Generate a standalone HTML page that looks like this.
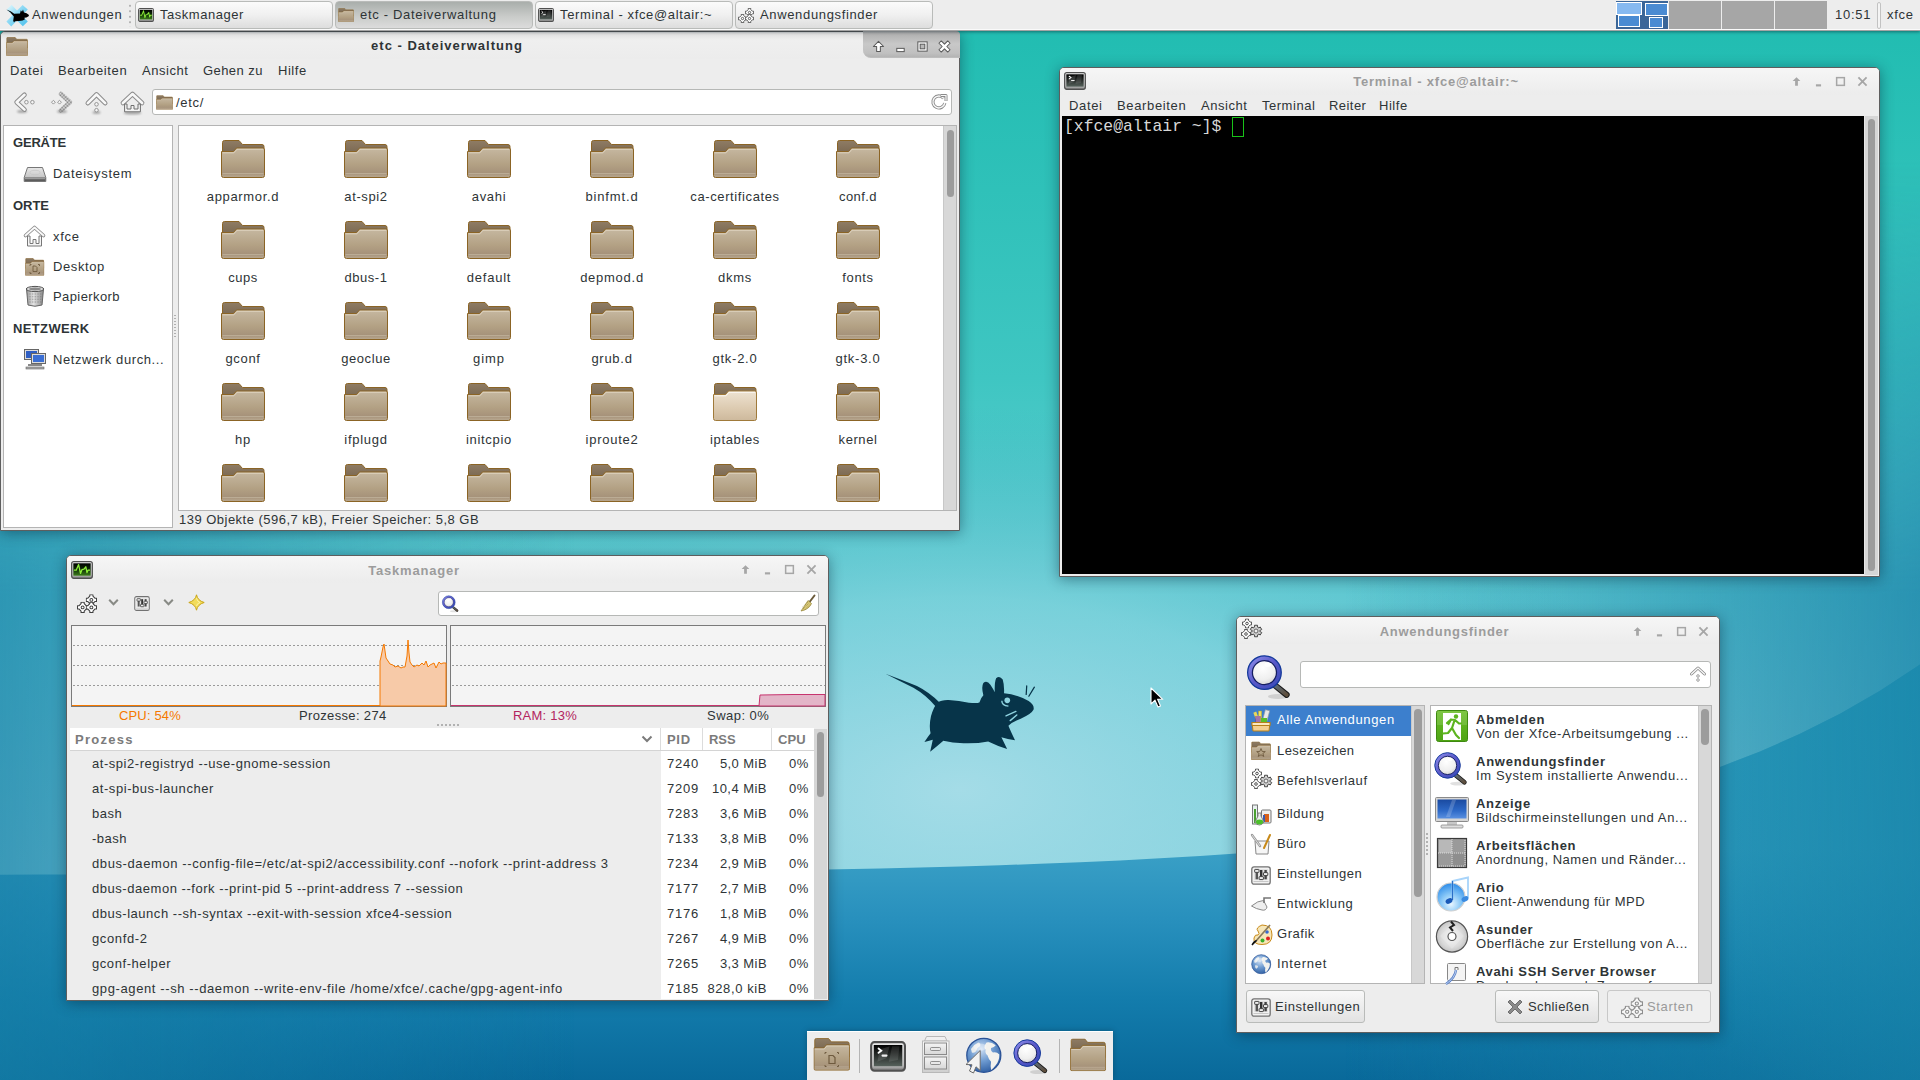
<!DOCTYPE html>
<html><head><meta charset="utf-8">
<style>
*{margin:0;padding:0;box-sizing:border-box}
html,body{width:1920px;height:1080px;overflow:hidden;position:relative;background:#2bb3bd}
body{font-family:"Liberation Sans",sans-serif;font-size:13px;letter-spacing:.45px;color:#2e3436}
.a{position:absolute}
.t{position:absolute;white-space:nowrap;line-height:17px;height:17px}
.b{font-weight:bold}
.win{position:absolute;background:#ededed;border:1px solid #5e5e5e;border-radius:5px 5px 0 0;box-shadow:0 2px 14px rgba(0,30,50,.45)}
.tb{position:absolute;left:0;right:0;top:0;height:27px;border-radius:4px 4px 0 0;background:linear-gradient(#f6f6f6,#ececec)}
.wt{position:absolute;top:6px;left:0;right:0;text-align:center;font-weight:bold;letter-spacing:1px;color:#9a9a9a;line-height:17px}
.frame{position:absolute;background:#fff;border:1px solid #b4b4b4}
.vs{position:absolute;background:#d8d8d8;border-left:1px solid #c8c8c8}
.th{position:absolute;background:#9c9c9c;border-radius:4px;left:2px;right:2px}
</style></head><body>
<!-- desktop background -->
<svg class="a" style="left:0;top:0" width="1920" height="1080" viewBox="0 0 1920 1080">
<defs>
<linearGradient id="bgTop" x1="0" y1="0" x2="0" y2="1">
<stop offset="0" stop-color="#1fbcb0"/><stop offset=".35" stop-color="#3fc6c2"/><stop offset=".6" stop-color="#6ccfd8"/><stop offset=".8" stop-color="#8fd6e2"/><stop offset="1" stop-color="#8fd6e2"/>
</linearGradient>
<radialGradient id="bgGlow" cx="960" cy="790" r="700" gradientUnits="userSpaceOnUse" gradientTransform="translate(960 790) scale(1 .55) translate(-960 -790)">
<stop offset="0" stop-color="#a8dde8" stop-opacity=".9"/><stop offset=".5" stop-color="#8ad3df" stop-opacity=".5"/><stop offset="1" stop-color="#2aa0b8" stop-opacity="0"/>
</radialGradient>
<linearGradient id="bgEdge" x1="0" y1="0" x2="1" y2="0">
<stop offset="0" stop-color="#167fa6" stop-opacity=".7"/><stop offset=".3" stop-color="#167fa6" stop-opacity="0"/><stop offset=".7" stop-color="#167fa6" stop-opacity="0"/><stop offset="1" stop-color="#167fa6" stop-opacity=".75"/>
</linearGradient>
<linearGradient id="bgLow" gradientUnits="userSpaceOnUse" x1="0" y1="850" x2="0" y2="1080">
<stop offset="0" stop-color="#3aa0c6"/><stop offset=".3" stop-color="#2890bd"/><stop offset=".65" stop-color="#137cac"/><stop offset="1" stop-color="#09699a"/>
</linearGradient>
</defs>
<rect width="1920" height="1080" fill="url(#bgTop)"/>
<rect width="1920" height="1080" fill="url(#bgGlow)"/>
<path d="M0 874.7 L40 874.6 L80 874.5 L120 874.5 L160 874.4 L200 874.3 L240 874.2 L280 874.1 L320 874.0 L360 873.8 L400 873.7 L440 873.5 L480 873.3 L520 873.0 L560 872.7 L600 872.4 L640 872.0 L680 871.6 L720 871.1 L760 870.6 L800 870.0 L840 869.2 L880 868.4 L920 867.5 L960 866.4 L1000 865.2 L1040 863.8 L1080 862.2 L1120 860.4 L1160 858.3 L1200 855.9 L1240 853.2 L1280 850.1 L1320 846.5 L1360 842.4 L1400 837.8 L1440 832.5 L1480 826.4 L1520 819.5 L1560 811.6 L1600 802.5 L1640 792.2 L1680 780.4 L1720 766.9 L1760 751.5 L1800 733.8 L1840 713.7 L1880 690.7 L1920 664.4 L1920 1080 L0 1080 Z" fill="url(#bgLow)"/>
<radialGradient id="lowR" cx="1920" cy="690" r="420" gradientUnits="userSpaceOnUse"><stop offset="0" stop-color="#2cb0c2" stop-opacity=".75"/><stop offset="1" stop-color="#2cb0c2" stop-opacity="0"/></radialGradient>
<path d="M0 874.7 L40 874.6 L80 874.5 L120 874.5 L160 874.4 L200 874.3 L240 874.2 L280 874.1 L320 874.0 L360 873.8 L400 873.7 L440 873.5 L480 873.3 L520 873.0 L560 872.7 L600 872.4 L640 872.0 L680 871.6 L720 871.1 L760 870.6 L800 870.0 L840 869.2 L880 868.4 L920 867.5 L960 866.4 L1000 865.2 L1040 863.8 L1080 862.2 L1120 860.4 L1160 858.3 L1200 855.9 L1240 853.2 L1280 850.1 L1320 846.5 L1360 842.4 L1400 837.8 L1440 832.5 L1480 826.4 L1520 819.5 L1560 811.6 L1600 802.5 L1640 792.2 L1680 780.4 L1720 766.9 L1760 751.5 L1800 733.8 L1840 713.7 L1880 690.7 L1920 664.4 L1920 1080 L0 1080 Z" fill="url(#lowR)"/>
<mask id="edgeMask"><rect width="1920" height="1080" fill="url(#edgeMG)"/></mask>
<linearGradient id="edgeMG" x1="0" y1="0" x2="0" y2="1"><stop offset=".15" stop-color="#000"/><stop offset=".55" stop-color="#fff"/><stop offset="1" stop-color="#fff"/></linearGradient>
<rect width="1920" height="1080" fill="url(#bgEdge)" mask="url(#edgeMask)"/>
</svg>

<!-- TOP PANEL -->
<div class="a" style="left:0;top:0;width:1920px;height:31px;z-index:100">
<div class="a" style="left:0;top:0;width:1920px;height:31px;background:#ededed;border-bottom:1px solid #a4a4a4;box-shadow:0 1px 3px rgba(0,20,30,.45)"></div>
<div class="a" style="left:0;top:29px;width:1920px;height:1px;background:#fafafa"></div>
<svg width="0" height="0" style="position:absolute"><defs>
<linearGradient id="grnS" x1="0" y1="0" x2="0" y2="1"><stop offset="0" stop-color="#000"/><stop offset=".45" stop-color="#0d2a06"/><stop offset="1" stop-color="#3c7d1a"/></linearGradient>
<linearGradient id="trmS" x1="0" y1="0" x2="0" y2="1"><stop offset="0" stop-color="#000"/><stop offset=".5" stop-color="#2a2e2c"/><stop offset="1" stop-color="#56625c"/></linearGradient>
<linearGradient id="monF" x1="0" y1="0" x2="0" y2="1"><stop offset="0" stop-color="#f2f2f2"/><stop offset=".8" stop-color="#cfcfcf"/><stop offset="1" stop-color="#6a6a6a"/></linearGradient>
<symbol id="tmIco" viewBox="0 0 22 18">
<rect x=".7" y=".7" width="20.6" height="16.6" rx="2" fill="url(#monF)" stroke="#505050" stroke-width="1.3"/>
<rect x="2.3" y="2.3" width="17.4" height="12.4" fill="url(#grnS)"/>
<path d="M3 9.2 L5.2 9.2 L6.6 6 L7.6 3.6 L9.5 12.4 L11 8.6 L13 8.2 L14.8 5.8 L16 11.6 L17 9.2 L19 9.2" fill="none" stroke="#8ef03a" stroke-width="1.3" stroke-linejoin="round"/>
</symbol>
<symbol id="trmIco" viewBox="0 0 22 18">
<rect x=".7" y=".7" width="20.6" height="16.6" rx="2" fill="url(#monF)" stroke="#505050" stroke-width="1.3"/>
<rect x="2.3" y="2.3" width="17.4" height="12.4" fill="url(#trmS)"/>
<path d="M6 5 L12 3 L10 10 L4.5 12 Z" fill="#fff" opacity=".12"/>
<path d="M13.5 3 L18 3 L17 11 L11.5 12 Z" fill="#fff" opacity=".1"/>
<path d="M5.2 4.3 L6.9 5.6 L5.2 6.9" fill="none" stroke="#fff" stroke-width="1.1" stroke-linecap="round"/>
<path d="M7.6 8.5 L10.1 8.5" stroke="#eee" stroke-width="1.2" stroke-linecap="round"/>
</symbol>
<symbol id="gear1" viewBox="-5 -5 10 10">
<path d="M-1.4 -4.6 L1.4 -4.6 L1.4 -3.3 L3.3 -1.4 L4.6 -1.4 L4.6 1.4 L3.3 1.4 L1.4 3.3 L1.4 4.6 L-1.4 4.6 L-1.4 3.3 L-3.3 1.4 L-4.6 1.4 L-4.6 -1.4 L-3.3 -1.4 L-1.4 -3.3 Z" fill="#fff" stroke="#404040" stroke-width=".95" stroke-linejoin="round"/>
<circle r="1.3" fill="none" stroke="#404040" stroke-width=".9"/>
</symbol>
<symbol id="gears" viewBox="0 0 16 16">
<use href="#gear1" x="7" y="1" width="9" height="9"/>
<use href="#gear1" x="0" y="7" width="9" height="9"/>
<use href="#gear1" x="7" y="7" width="9" height="9"/>
</symbol>
</defs></svg>
<!-- panel content -->
<svg class="a" style="left:3px;top:2px" width="28" height="26" viewBox="0 0 28 26">
<defs><linearGradient id="xg" x1="0" y1="0" x2="1" y2="1"><stop offset="0" stop-color="#e8fbff"/><stop offset=".45" stop-color="#8ad8f4"/><stop offset="1" stop-color="#4cc0ec"/></linearGradient></defs>
<path d="M8.6 2.8 L14 8.6 L19.6 3 L24.8 7.6 L19 13.6 L24.8 19.6 L19.8 24.2 L14 18.4 L8.2 24.4 L3.4 19.6 L9.2 13.6 L3.6 7.6 Z" fill="url(#xg)"/>
<path d="M3.4 7.6 L7.6 9.2 L11.2 11.8 L17 11.6 L17.8 8.2 L19 9.8 L20 7.6 L21 10.4 L23.6 11.2 L26 13 L25.6 14.2 L23.4 15.4 L21.4 15.8 L21.8 17.4 L19.6 18.6 L16 19 L12 19.2 L11 20.6 L10.2 18.8 L10.8 14.6 L7.2 10.2 Z" fill="#000"/>
</svg>
<div class="t" style="left:32px;top:6px;letter-spacing:0.66px">Anwendungen</div>
<div class="a" style="left:129px;top:3px;width:2px;height:24px;background:radial-gradient(circle,#b4b4b4 0.9px,transparent 1.1px) 0 0/2px 5.5px"></div>
<div class="a" style="left:135px;top:1px;width:198px;height:28px;border:1px solid #b9bbb9;border-radius:4px;background:linear-gradient(#fbfbfb,#f0f0f0 50%,#dddddd)"></div>
<svg class="a" style="left:138px;top:8px" width="16" height="14" viewBox="0 0 22 18" preserveAspectRatio="none"><use href="#tmIco"/></svg>
<div class="t" style="left:160px;top:6px;letter-spacing:0.53px">Taskmanager</div>
<div class="a" style="left:335px;top:1px;width:198px;height:28px;border:1px solid #b9bbb9;border-radius:4px;background:linear-gradient(#a9aeab,#c9cbc9 55%,#dcdcdc)"></div>
<svg class="a" style="left:338px;top:8px" width="16" height="14" viewBox="0 0 44 38" preserveAspectRatio="none"><use href="#folder"/></svg>
<div class="t" style="left:360px;top:6px;letter-spacing:0.69px">etc - Dateiverwaltung</div>
<div class="a" style="left:535px;top:1px;width:198px;height:28px;border:1px solid #b9bbb9;border-radius:4px;background:linear-gradient(#fbfbfb,#f0f0f0 50%,#dddddd)"></div>
<svg class="a" style="left:538px;top:8px" width="16" height="14" viewBox="0 0 22 18" preserveAspectRatio="none"><use href="#trmIco"/></svg>
<div class="t" style="left:560px;top:6px;letter-spacing:0.63px">Terminal - xfce@altair:~</div>
<div class="a" style="left:735px;top:1px;width:198px;height:28px;border:1px solid #b9bbb9;border-radius:4px;background:linear-gradient(#fbfbfb,#f0f0f0 50%,#dddddd)"></div>
<svg class="a" style="left:738px;top:7px" width="16" height="16" viewBox="0 0 16 16"><use href="#gears"/></svg>
<div class="t" style="left:760px;top:6px;letter-spacing:0.65px">Anwendungsfinder</div>
<div class="a" style="left:1616px;top:1px;width:52px;height:28px;background:#3b6698"></div>
<div class="a" style="left:1616px;top:2px;width:26px;height:13px;background:#86b9f0;border:1px solid #fff"></div>
<div class="a" style="left:1618px;top:15px;width:22px;height:12px;background:#4a8bd2;border:1px solid #fff"></div>
<div class="a" style="left:1645px;top:3px;width:23px;height:13px;background:#4a8bd2;border:1px solid #fff"></div>
<div class="a" style="left:1649px;top:17px;width:14px;height:11px;background:#4a8bd2;border:1px solid #fff"></div>
<div class="a" style="left:1669px;top:1px;width:52px;height:28px;background:#a6a6a6"></div>
<div class="a" style="left:1722px;top:1px;width:52px;height:28px;background:#a6a6a6"></div>
<div class="a" style="left:1775px;top:1px;width:52px;height:28px;background:#a6a6a6"></div>
<div class="t" style="left:1835px;top:6px;letter-spacing:0.76px">10:51</div>
<div class="a" style="left:1877px;top:2px;width:4px;height:27px;border:1px solid #c2c2c2;border-radius:2px;background:#f4f4f4"></div>
<div class="t" style="left:1887px;top:6px;letter-spacing:0.68px">xfce</div>
</div>


<svg width="0" height="0" style="position:absolute">
<defs>
<linearGradient id="fBack" x1="0" y1="0" x2="0" y2="1"><stop offset="0" stop-color="#8f7c64"/><stop offset="1" stop-color="#6c5b45"/></linearGradient>
<linearGradient id="fFront" x1="0" y1="0" x2="0" y2="1"><stop offset="0" stop-color="#c6b8a1"/><stop offset=".55" stop-color="#b3a184"/><stop offset=".85" stop-color="#a6927a"/><stop offset="1" stop-color="#b9a991"/></linearGradient>
<linearGradient id="fFrontL" x1="0" y1="0" x2="0" y2="1"><stop offset="0" stop-color="#eee3d2"/><stop offset=".6" stop-color="#dccab0"/><stop offset="1" stop-color="#cdb99c"/></linearGradient>
<symbol id="folder" viewBox="0 0 44 38">
<path d="M1.5 2.5 Q1.5 .5 3.5 .5 L18 .5 L21.5 4.5 L41 4.5 Q43 4.5 43 6.5 L43 22 L1.5 22 Z" fill="url(#fBack)" stroke="#8b6425" stroke-width="1"/>
<path d="M.5 11.5 L12.5 11.5 L15.5 8 L42 8 Q43.5 8 43.5 10 L43.5 35.5 Q43.5 37.5 41.5 37.5 L2.5 37.5 Q.5 37.5 .5 35.5 Z" fill="url(#fFront)" stroke="#8b6425" stroke-width="1"/>
<path d="M1.5 12.8 L13 12.8 L16 9.3 L42.3 9.3" fill="none" stroke="#e3d8c6" stroke-width="1" opacity=".8"/>
<path d="M1.5 33.5 L42.5 33.5" stroke="#c9bca6" stroke-width="1" opacity=".6"/>
</symbol>
<symbol id="folderL" viewBox="0 0 44 38">
<path d="M1.5 2.5 Q1.5 .5 3.5 .5 L18 .5 L21.5 4.5 L41 4.5 Q43 4.5 43 6.5 L43 22 L1.5 22 Z" fill="url(#fBack)" stroke="#8b6425" stroke-width="1"/>
<path d="M.5 11.5 L12.5 11.5 L15.5 8 L42 8 Q43.5 8 43.5 10 L43.5 35.5 Q43.5 37.5 41.5 37.5 L2.5 37.5 Q.5 37.5 .5 35.5 Z" fill="url(#fFrontL)" stroke="#a07a3a" stroke-width="1"/>
<path d="M1.5 12.8 L13 12.8 L16 9.3 L42.3 9.3" fill="none" stroke="#fff" stroke-width="1" opacity=".8"/>
</symbol>
<symbol id="wbUp" viewBox="0 0 14 14"><path d="M7 1.5 L12.5 7 L9 7 L9 12.5 L5 12.5 L5 7 L1.5 7 Z" fill="#fff" stroke="#5a5a5a" stroke-width="1.1" stroke-linejoin="round"/></symbol>
<symbol id="wbMin" viewBox="0 0 14 14"><rect x="3" y="9" width="8" height="3.5" fill="#fff" stroke="#5a5a5a" stroke-width="1.1"/></symbol>
<symbol id="wbMax" viewBox="0 0 14 14"><rect x="2" y="2" width="10" height="10" fill="#fff" stroke="#5a5a5a" stroke-width="1.1"/><rect x="4.5" y="4.5" width="5" height="5" fill="#b8b8b8" stroke="#5a5a5a" stroke-width="1.1"/></symbol>
<symbol id="wbClose" viewBox="0 0 14 14"><path d="M1 3.5 L3.5 1 L7 4.5 L10.5 1 L13 3.5 L9.5 7 L13 10.5 L10.5 13 L7 9.5 L3.5 13 L1 10.5 L4.5 7 Z" fill="#fff" stroke="#5a5a5a" stroke-width="1.1" stroke-linejoin="round"/></symbol>
<symbol id="ibUp" viewBox="0 0 14 14"><path d="M7 3 L10.6 6.6 L8.3 6.6 L8.3 11 L5.7 11 L5.7 6.6 L3.4 6.6 Z" fill="#a6a6a6"/></symbol>
<symbol id="ibMin" viewBox="0 0 14 14"><rect x="4.6" y="9.6" width="4.8" height="2" fill="#a6a6a6"/></symbol>
<symbol id="ibMax" viewBox="0 0 14 14"><rect x="3.4" y="3.4" width="7.2" height="7.2" fill="none" stroke="#a6a6a6" stroke-width="1.4"/></symbol>
<symbol id="ibClose" viewBox="0 0 14 14"><path d="M3.2 3.2 L10.8 10.8 M10.8 3.2 L3.2 10.8" stroke="#a6a6a6" stroke-width="1.7"/></symbol>
</defs></svg>
<!-- FILE MANAGER -->
<div class="win" style="left:0;top:31px;width:960px;height:500px;border-radius:5px 5px 0 0">
 <div class="tb" style="background:linear-gradient(#dcdcdc,#efefef 30%,#ececec)"></div>
 <svg class="a" style="left:5px;top:5px" width="22" height="19" viewBox="0 0 44 38"><use href="#folder"/></svg>
 <div class="wt" style="left:30px;right:96px;top:5px;color:#2e3436;letter-spacing:1px">etc - Dateiverwaltung</div>
 <div class="a" style="left:862px;top:-1px;width:97px;height:27px;border-radius:0 4px 0 8px;background:linear-gradient(#aaaaaa,#c8c8c8 50%,#c0c0c0 85%,#b4b4b4);border-bottom:1px solid #bdbdbd"></div>
 <svg class="a" style="left:871px;top:8px" width="13" height="13" viewBox="0 0 14 14"><use href="#wbUp"/></svg>
 <svg class="a" style="left:893px;top:8px" width="13" height="13" viewBox="0 0 14 14"><use href="#wbMin"/></svg>
 <svg class="a" style="left:915px;top:8px" width="13" height="13" viewBox="0 0 14 14"><use href="#wbMax"/></svg>
 <svg class="a" style="left:937px;top:8px" width="13" height="13" viewBox="0 0 14 14"><use href="#wbClose"/></svg>
</div>
<div class="t" style="left:10px;top:62px;letter-spacing:0.65px">Datei</div>
<div class="t" style="left:58px;top:62px;letter-spacing:0.64px">Bearbeiten</div>
<div class="t" style="left:142px;top:62px;letter-spacing:0.55px">Ansicht</div>
<div class="t" style="left:203px;top:62px;letter-spacing:0.43px">Gehen zu</div>
<div class="t" style="left:278px;top:62px;letter-spacing:0.53px">Hilfe</div>
<svg class="a" style="left:8px;top:86px" width="144" height="36" viewBox="8 86 144 36">
<defs><filter id="sh" x="-20%" y="-20%" width="140%" height="160%"><feGaussianBlur stdDeviation=".8"/></filter><pattern id="chk" width="1.4" height="1.4" patternUnits="userSpaceOnUse"><rect width=".7" height=".7" fill="#7a7a7a"/><rect x=".7" y=".7" width=".7" height=".7" fill="#7a7a7a"/></pattern></defs>
<g opacity=".35" filter="url(#sh)"><ellipse cx="22" cy="111.5" rx="5" ry="1.3" fill="#000"/><ellipse cx="62" cy="111.5" rx="5" ry="1.3" fill="#000"/><ellipse cx="96.5" cy="112.5" rx="4" ry="1.2" fill="#000"/><ellipse cx="132.5" cy="113" rx="9" ry="1.3" fill="#000"/></g>
<g fill="none" stroke-linecap="round" stroke-linejoin="round">
<path d="M24.5 94.8 L16.6 102.2 L24.5 109.6" stroke="#8c8c8c" stroke-width="4.6"/>
<path d="M24.5 94.8 L16.6 102.2 L24.5 109.6" stroke="#f7f7f7" stroke-width="2.6"/>
<path d="M87.8 103.2 L96.5 94.5 L105.2 103.2" stroke="#8c8c8c" stroke-width="4.6"/>
<path d="M87.8 103.2 L96.5 94.5 L105.2 103.2" stroke="#f7f7f7" stroke-width="2.6"/>
<path d="M122.9 103 L132.5 94 L142.1 103" stroke="#8c8c8c" stroke-width="4.6"/>
<path d="M122.9 103 L132.5 94 L142.1 103" stroke="#f7f7f7" stroke-width="2.6"/>
<path d="M61 94 L70 102.2 L61 110.4" stroke="url(#chk)" stroke-width="4.6"/>
</g>
<g fill="#f4f4f4" stroke="#8c8c8c" stroke-width=".9">
<circle cx="26.4" cy="102.2" r="1.8"/><circle cx="32.4" cy="102.2" r="1.8"/>
<circle cx="96.5" cy="104.3" r="1.8"/><circle cx="96.5" cy="110.2" r="1.8"/>
<path d="M53.4 100.3 L55.3 102.2 L53.4 104.1 L51.5 102.2 Z"/><path d="M59.5 100.3 L61.4 102.2 L59.5 104.1 L57.6 102.2 Z"/>
<path d="M124.6 104 L124.6 111.8 L140.4 111.8 L140.4 104 L138 104 L138 109 L134 109 L134 105.5 L131 105.5 L131 109 L127 109 L127 104 Z" stroke="#6e6e6e" stroke-width="1"/>
</g>
</svg>

<div class="a" style="left:152px;top:89px;width:800px;height:26px;background:#fff;border:1px solid #b6b8b6;border-radius:3px"></div>
<svg class="a" style="left:156px;top:95px" width="17" height="15" viewBox="0 0 44 38"><use href="#folder"/></svg>
<div class="t" style="left:176px;top:94px;letter-spacing:0.71px">/etc/</div>
<svg class="a" style="left:930px;top:93px" width="18" height="18" viewBox="0 0 18 18">
<path d="M13.6 5.2 A6 6 0 1 0 14.8 10" fill="none" stroke="#8a8a8a" stroke-width="3.2"/>
<path d="M13.6 5.2 A6 6 0 1 0 14.8 10" fill="none" stroke="#f8f8f8" stroke-width="1.4"/>
<path d="M10.5 2.5 L16 2.5 L16 8" fill="none" stroke="#8a8a8a" stroke-width="3" stroke-linejoin="round"/>
<path d="M10.8 2.5 L16 2.5 L16 7.7" fill="none" stroke="#f8f8f8" stroke-width="1.2"/>
</svg>

<!-- side pane -->
<div class="frame" style="left:3px;top:125px;width:170px;height:403px"></div>
<div class="t b" style="left:13px;top:134px;letter-spacing:-0.19px">GERÄTE</div>
<div class="t" style="left:53px;top:165px;letter-spacing:0.70px">Dateisystem</div>
<div class="t b" style="left:13px;top:197px;letter-spacing:-0.03px">ORTE</div>
<div class="t" style="left:53px;top:228px;letter-spacing:0.68px">xfce</div>
<div class="t" style="left:53px;top:258px;letter-spacing:0.61px">Desktop</div>
<div class="t" style="left:53px;top:288px;letter-spacing:0.41px">Papierkorb</div>
<div class="t b" style="left:13px;top:320px;letter-spacing:0.37px">NETZWERK</div>
<div class="t" style="left:53px;top:351px;letter-spacing:0.59px">Netzwerk durch...</div>
<svg class="a" style="left:22px;top:163px" width="28" height="148" viewBox="22 163 28 148">
<defs>
<linearGradient id="drv" x1="0" y1="0" x2="0" y2="1"><stop offset="0" stop-color="#e8e8e8"/><stop offset="1" stop-color="#b8b8b8"/></linearGradient>
<linearGradient id="trash" x1="0" y1="0" x2="1" y2="0"><stop offset="0" stop-color="#9a9a9a"/><stop offset=".4" stop-color="#e6e6e6"/><stop offset="1" stop-color="#8a8a8a"/></linearGradient>
<pattern id="mesh" width="1.6" height="1.6" patternUnits="userSpaceOnUse"><rect width=".8" height=".8" fill="#6a6a6a"/></pattern>
</defs>
<path d="M27.5 167.5 L42.5 167.5 L45.8 177.5 L45.8 181.5 L24.2 181.5 L24.2 177.5 Z" fill="url(#drv)" stroke="#777" stroke-width="1"/>
<rect x="24.5" y="177.5" width="21" height="3.5" fill="#5c5c5c"/><rect x="25" y="178.2" width="20" height="1" fill="#aaa"/>
<ellipse cx="35" cy="172.5" rx="5" ry="2.2" fill="none" stroke="#c6c6c6" stroke-width=".8"/>
<path d="M25.5 235.5 L34.5 227.5 L43.5 235.5" fill="none" stroke="#8c8c8c" stroke-width="3.6" stroke-linecap="round" stroke-linejoin="round"/>
<path d="M25.5 235.5 L34.5 227.5 L43.5 235.5" fill="none" stroke="#fafafa" stroke-width="1.8" stroke-linecap="round" stroke-linejoin="round"/>
<path d="M27.5 236 L27.5 246 L41.5 246 L41.5 236 L39 236 L39 243.5 L36 243.5 L36 239.5 L33 239.5 L33 243.5 L30 243.5 L30 236 Z" fill="#f6f6f6" stroke="#777" stroke-width="1"/>
<g transform="translate(25 258) scale(.44 .47)"><use href="#folder" width="44" height="38"/></g>
<g fill="none" stroke="#6f5b3f" stroke-width=".9"><path d="M30 266 L30 264.5 L31.5 264.5 M38 264.5 L39.5 264.5 L39.5 266 M30 272 L30 273.5 L31.5 273.5 M38 273.5 L39.5 273.5 L39.5 272"/><path d="M33 266 L35.5 266 L37 267.5 L37 271.5 L33 271.5 Z"/></g>
<path d="M26.5 289 L43.5 289 L42 305 Q35 307.5 28 305 Z" fill="url(#trash)" stroke="#666" stroke-width="1"/>
<rect x="27.5" y="291.5" width="15" height="12" fill="url(#mesh)" opacity=".55"/>
<ellipse cx="35" cy="289" rx="8.8" ry="2.6" fill="#d8d8d8" stroke="#555" stroke-width="1"/>
<ellipse cx="35" cy="289" rx="6" ry="1.4" fill="#8a8a8a"/>
</svg>
<svg class="a" style="left:22px;top:347px" width="28" height="26" viewBox="22 347 28 26">
<rect x="24.5" y="349.5" width="14" height="10" fill="#ddd" stroke="#666"/><rect x="26" y="351" width="11" height="7" fill="#2f5fc4"/>
<rect x="31.5" y="353.5" width="14" height="10" fill="#ddd" stroke="#666"/><rect x="33" y="355" width="11" height="7" fill="#3b6fd4"/>
<rect x="28" y="364" width="14" height="2" fill="#888"/><rect x="26" y="367" width="18" height="2" fill="#aaa" stroke="#666" stroke-width=".6"/>
</svg>

<div class="a" style="left:174px;top:314px;width:2px;height:24px;background:radial-gradient(circle,#b0b0b0 .7px,transparent .9px) 0 0/2px 3px"></div>
<!-- icon view -->
<div class="frame" style="left:178px;top:125px;width:779px;height:386px"></div>
<div class="vs" style="left:943px;top:126px;width:13px;height:384px"><div class="th" style="top:4px;height:67px;left:3px;right:2px"></div></div>
<svg class="a" style="left:221px;top:140px" width="44" height="38" viewBox="0 0 44 38"><use href="#folder" width="44" height="38"/></svg>
<div class="t" style="left:183px;width:120px;text-align:center;top:188px;letter-spacing:0.67px">apparmor.d</div>
<svg class="a" style="left:344px;top:140px" width="44" height="38" viewBox="0 0 44 38"><use href="#folder" width="44" height="38"/></svg>
<div class="t" style="left:306px;width:120px;text-align:center;top:188px;letter-spacing:0.61px">at-spi2</div>
<svg class="a" style="left:467px;top:140px" width="44" height="38" viewBox="0 0 44 38"><use href="#folder" width="44" height="38"/></svg>
<div class="t" style="left:429px;width:120px;text-align:center;top:188px;letter-spacing:0.66px">avahi</div>
<svg class="a" style="left:590px;top:140px" width="44" height="38" viewBox="0 0 44 38"><use href="#folder" width="44" height="38"/></svg>
<div class="t" style="left:552px;width:120px;text-align:center;top:188px;letter-spacing:0.86px">binfmt.d</div>
<svg class="a" style="left:713px;top:140px" width="44" height="38" viewBox="0 0 44 38"><use href="#folder" width="44" height="38"/></svg>
<div class="t" style="left:675px;width:120px;text-align:center;top:188px;letter-spacing:0.61px">ca-certificates</div>
<svg class="a" style="left:836px;top:140px" width="44" height="38" viewBox="0 0 44 38"><use href="#folder" width="44" height="38"/></svg>
<div class="t" style="left:798px;width:120px;text-align:center;top:188px;letter-spacing:0.45px">conf.d</div>
<svg class="a" style="left:221px;top:221px" width="44" height="38" viewBox="0 0 44 38"><use href="#folder" width="44" height="38"/></svg>
<div class="t" style="left:183px;width:120px;text-align:center;top:269px;letter-spacing:0.50px">cups</div>
<svg class="a" style="left:344px;top:221px" width="44" height="38" viewBox="0 0 44 38"><use href="#folder" width="44" height="38"/></svg>
<div class="t" style="left:306px;width:120px;text-align:center;top:269px;letter-spacing:0.56px">dbus-1</div>
<svg class="a" style="left:467px;top:221px" width="44" height="38" viewBox="0 0 44 38"><use href="#folder" width="44" height="38"/></svg>
<div class="t" style="left:429px;width:120px;text-align:center;top:269px;letter-spacing:0.76px">default</div>
<svg class="a" style="left:590px;top:221px" width="44" height="38" viewBox="0 0 44 38"><use href="#folder" width="44" height="38"/></svg>
<div class="t" style="left:552px;width:120px;text-align:center;top:269px;letter-spacing:0.74px">depmod.d</div>
<svg class="a" style="left:713px;top:221px" width="44" height="38" viewBox="0 0 44 38"><use href="#folder" width="44" height="38"/></svg>
<div class="t" style="left:675px;width:120px;text-align:center;top:269px;letter-spacing:0.77px">dkms</div>
<svg class="a" style="left:836px;top:221px" width="44" height="38" viewBox="0 0 44 38"><use href="#folder" width="44" height="38"/></svg>
<div class="t" style="left:798px;width:120px;text-align:center;top:269px;letter-spacing:0.69px">fonts</div>
<svg class="a" style="left:221px;top:302px" width="44" height="38" viewBox="0 0 44 38"><use href="#folder" width="44" height="38"/></svg>
<div class="t" style="left:183px;width:120px;text-align:center;top:350px;letter-spacing:0.65px">gconf</div>
<svg class="a" style="left:344px;top:302px" width="44" height="38" viewBox="0 0 44 38"><use href="#folder" width="44" height="38"/></svg>
<div class="t" style="left:306px;width:120px;text-align:center;top:350px;letter-spacing:0.58px">geoclue</div>
<svg class="a" style="left:467px;top:302px" width="44" height="38" viewBox="0 0 44 38"><use href="#folder" width="44" height="38"/></svg>
<div class="t" style="left:429px;width:120px;text-align:center;top:350px;letter-spacing:0.90px">gimp</div>
<svg class="a" style="left:590px;top:302px" width="44" height="38" viewBox="0 0 44 38"><use href="#folder" width="44" height="38"/></svg>
<div class="t" style="left:552px;width:120px;text-align:center;top:350px;letter-spacing:0.72px">grub.d</div>
<svg class="a" style="left:713px;top:302px" width="44" height="38" viewBox="0 0 44 38"><use href="#folder" width="44" height="38"/></svg>
<div class="t" style="left:675px;width:120px;text-align:center;top:350px;letter-spacing:0.73px">gtk-2.0</div>
<svg class="a" style="left:836px;top:302px" width="44" height="38" viewBox="0 0 44 38"><use href="#folder" width="44" height="38"/></svg>
<div class="t" style="left:798px;width:120px;text-align:center;top:350px;letter-spacing:0.73px">gtk-3.0</div>
<svg class="a" style="left:221px;top:383px" width="44" height="38" viewBox="0 0 44 38"><use href="#folder" width="44" height="38"/></svg>
<div class="t" style="left:183px;width:120px;text-align:center;top:431px;letter-spacing:0.76px">hp</div>
<svg class="a" style="left:344px;top:383px" width="44" height="38" viewBox="0 0 44 38"><use href="#folder" width="44" height="38"/></svg>
<div class="t" style="left:306px;width:120px;text-align:center;top:431px;letter-spacing:0.73px">ifplugd</div>
<svg class="a" style="left:467px;top:383px" width="44" height="38" viewBox="0 0 44 38"><use href="#folder" width="44" height="38"/></svg>
<div class="t" style="left:429px;width:120px;text-align:center;top:431px;letter-spacing:0.70px">initcpio</div>
<svg class="a" style="left:590px;top:383px" width="44" height="38" viewBox="0 0 44 38"><use href="#folder" width="44" height="38"/></svg>
<div class="t" style="left:552px;width:120px;text-align:center;top:431px;letter-spacing:0.73px">iproute2</div>
<svg class="a" style="left:713px;top:383px" width="44" height="38" viewBox="0 0 44 38"><use href="#folderL" width="44" height="38"/></svg>
<div class="t" style="left:675px;width:120px;text-align:center;top:431px;letter-spacing:0.65px">iptables</div>
<svg class="a" style="left:836px;top:383px" width="44" height="38" viewBox="0 0 44 38"><use href="#folder" width="44" height="38"/></svg>
<div class="t" style="left:798px;width:120px;text-align:center;top:431px;letter-spacing:0.57px">kernel</div>
<svg class="a" style="left:221px;top:464px" width="44" height="38" viewBox="0 0 44 38"><use href="#folder" width="44" height="38"/></svg>
<svg class="a" style="left:344px;top:464px" width="44" height="38" viewBox="0 0 44 38"><use href="#folder" width="44" height="38"/></svg>
<svg class="a" style="left:467px;top:464px" width="44" height="38" viewBox="0 0 44 38"><use href="#folder" width="44" height="38"/></svg>
<svg class="a" style="left:590px;top:464px" width="44" height="38" viewBox="0 0 44 38"><use href="#folder" width="44" height="38"/></svg>
<svg class="a" style="left:713px;top:464px" width="44" height="38" viewBox="0 0 44 38"><use href="#folder" width="44" height="38"/></svg>
<svg class="a" style="left:836px;top:464px" width="44" height="38" viewBox="0 0 44 38"><use href="#folder" width="44" height="38"/></svg>
<div class="t" style="left:179px;top:511px;letter-spacing:0.48px">139 Objekte (596,7 kB), Freier Speicher: 5,8 GB</div>

<!-- TERMINAL -->
<div class="win" style="left:1059px;top:67px;width:821px;height:510px"><div class="tb"></div></div>
<svg class="a" style="left:1064px;top:72px" width="22" height="18" viewBox="0 0 22 18"><use href="#trmIco"/></svg>
<div class="t b" style="left:1060px;width:752px;text-align:center;top:73px;color:#9c9c9c;padding-left:0;letter-spacing:0.80px">Terminal - xfce@altair:~</div>
<svg class="a" style="left:1789px;top:74px" width="15" height="15"><use href="#ibUp"/></svg>
<svg class="a" style="left:1811px;top:74px" width="15" height="15"><use href="#ibMin"/></svg>
<svg class="a" style="left:1833px;top:74px" width="15" height="15"><use href="#ibMax"/></svg>
<svg class="a" style="left:1855px;top:74px" width="15" height="15"><use href="#ibClose"/></svg>

<div class="t" style="left:1069px;top:97px;letter-spacing:0.65px">Datei</div>
<div class="t" style="left:1117px;top:97px;letter-spacing:0.64px">Bearbeiten</div>
<div class="t" style="left:1201px;top:97px;letter-spacing:0.55px">Ansicht</div>
<div class="t" style="left:1262px;top:97px;letter-spacing:0.52px">Terminal</div>
<div class="t" style="left:1329px;top:97px;letter-spacing:0.44px">Reiter</div>
<div class="t" style="left:1379px;top:97px;letter-spacing:0.53px">Hilfe</div>
<div class="a" style="left:1062px;top:116px;width:802px;height:458px;background:#000"></div>
<div class="a" style="left:1064px;top:116px;font-family:'Liberation Mono',monospace;font-size:16.4px;letter-spacing:0;color:#d8d8d8;line-height:21px;white-space:pre">[xfce@altair ~]$ </div>
<div class="a" style="left:1232px;top:117px;width:12px;height:20px;border:1.5px solid #19c219"></div>
<div class="a" style="left:1864px;top:116px;width:14px;height:459px;background:#d6d6d6;border-left:1px solid #e6e6e6"><div class="a" style="left:3px;top:3px;width:7px;height:452px;background:#9c9c9c;border-radius:4px"></div></div>

<!-- TASKMANAGER -->
<div class="win" style="left:66px;top:555px;width:763px;height:446px"><div class="tb"></div></div>
<svg class="a" style="left:71px;top:561px" width="22" height="18" viewBox="0 0 22 18"><use href="#tmIco"/></svg>
<div class="t b" style="left:67px;width:694px;text-align:center;top:562px;color:#9c9c9c;letter-spacing:0.79px">Taskmanager</div>
<svg class="a" style="left:738px;top:562px" width="15" height="15"><use href="#ibUp"/></svg>
<svg class="a" style="left:760px;top:562px" width="15" height="15"><use href="#ibMin"/></svg>
<svg class="a" style="left:782px;top:562px" width="15" height="15"><use href="#ibMax"/></svg>
<svg class="a" style="left:804px;top:562px" width="15" height="15"><use href="#ibClose"/></svg>

<svg class="a" style="left:77px;top:593px" width="20" height="20" viewBox="0 0 16 16"><use href="#gears"/></svg>
<svg class="a" style="left:108px;top:598px" width="11" height="9" viewBox="0 0 11 9"><path d="M1.2 1.8 L5.5 6.3 L9.8 1.8" fill="none" stroke="#888a85" stroke-width="2"/></svg>
<svg class="a" style="left:134px;top:596px" width="16" height="15" viewBox="0 0 20 19"><use href="#mixer"/></svg>
<svg class="a" style="left:163px;top:598px" width="11" height="9" viewBox="0 0 11 9"><path d="M1.2 1.8 L5.5 6.3 L9.8 1.8" fill="none" stroke="#888a85" stroke-width="2"/></svg>
<svg class="a" style="left:188px;top:594px" width="17" height="17" viewBox="0 0 17 17"><path d="M8.5 .8 Q9.6 6.6 16.2 8.5 Q9.6 10.4 8.5 16.2 Q7.4 10.4 .8 8.5 Q7.4 6.6 8.5 .8 Z" fill="#f2dc5a" stroke="#c9a418" stroke-width="1"/><path d="M8.5 4 Q9 7.5 12 8.5 Q9 9.3 8.5 12" fill="none" stroke="#fff6b0" stroke-width=".8"/></svg>

<div class="a" style="left:438px;top:591px;width:381px;height:25px;background:#fff;border:1px solid #b6b8b6;border-radius:3px"></div>
<svg class="a" style="left:441px;top:594px" width="19" height="19" viewBox="0 0 44 44"><use href="#mag"/></svg>
<svg class="a" style="left:799px;top:594px" width="18" height="18" viewBox="0 0 18 18">
<path d="M15.5 1.5 L10.5 8" stroke="#6a5a3a" stroke-width="2" stroke-linecap="round"/>
<path d="M9 6.5 L12.5 9.5 Q10 15.5 2 17 Q6 11.5 9 6.5 Z" fill="#d8c878" stroke="#9a8a40" stroke-width=".8"/>
<path d="M4 15 L10 9 M6 15.5 L11 10.5 M3.5 13 L9 8" stroke="#8a7a30" stroke-width=".6" stroke-dasharray="1 1"/>
</svg>

<svg class="a" style="left:71px;top:625px" width="376" height="82" viewBox="0 0 376 82">
<rect x=".5" y=".5" width="375" height="81" fill="#f4f4f4" stroke="#7a7a7a"/>
<g stroke="#9a9a9a" stroke-dasharray="2 2" stroke-width="1"><line x1="2" y1="20.5" x2="375" y2="20.5"/><line x1="2" y1="40.5" x2="375" y2="40.5"/><line x1="2" y1="60.5" x2="375" y2="60.5"/></g>
<path d="M309 81 L309 36 L310 32 L312 22 L313 19 L314 26 L315 33 L317 36 L319 39 L322 40 L324 42 L327 41 L330 43 L332 42 L334 42 L336 31 L337 15 L338 28 L339 37 L341 40 L343 42 L346 40 L348 41 L351 38 L353 40 L355 36 L357 42 L359 40 L361 39 L363 38 L365 43 L368 37 L370 39 L372 38 L375 38 L375 81 Z" fill="#f7caa8" stroke="#f57900" stroke-width="1"/>
<line x1="1" y1="80.5" x2="309" y2="80.5" stroke="#f57900" stroke-width="1"/>
</svg>
<svg class="a" style="left:450px;top:625px" width="376" height="82" viewBox="0 0 376 82">
<rect x=".5" y=".5" width="375" height="81" fill="#f4f4f4" stroke="#7a7a7a"/>
<g stroke="#9a9a9a" stroke-dasharray="2 2" stroke-width="1"><line x1="2" y1="20.5" x2="375" y2="20.5"/><line x1="2" y1="40.5" x2="375" y2="40.5"/><line x1="2" y1="60.5" x2="375" y2="60.5"/></g>
<path d="M309 81 L310 70 L343 69.5 L375 69.5 L375 81 Z" fill="#e3b5c8" stroke="#c7346e" stroke-width="1"/>
<line x1="1" y1="80.5" x2="309" y2="80.5" stroke="#c7346e" stroke-width="1"/>
</svg>
<div class="t" style="left:119px;top:707px;color:#f57900;letter-spacing:0.15px">CPU: 54%</div>
<div class="t" style="left:299px;top:707px;letter-spacing:0.34px">Prozesse: 274</div>
<div class="t" style="left:513px;top:707px;color:#b3245e;letter-spacing:0.23px">RAM: 13%</div>
<div class="t" style="left:707px;top:707px;letter-spacing:0.47px">Swap: 0%</div>
<div class="a" style="left:436px;top:724px;width:25px;height:2px;background:radial-gradient(circle,#b0b0b0 .7px,transparent .9px) 0 0/4px 2px"></div>
<div class="a" style="left:70px;top:728px;width:744px;height:23px;background:#fff;border-bottom:1px solid #d4d4d4"></div>
<div class="a" style="left:660px;top:728px;width:1px;height:22px;background:#dcdcdc"></div>
<div class="a" style="left:702px;top:728px;width:1px;height:22px;background:#dcdcdc"></div>
<div class="a" style="left:771px;top:728px;width:1px;height:22px;background:#dcdcdc"></div>
<div class="t b" style="left:75px;top:731px;color:#7b7b7b;--nols:1;letter-spacing:1.25px">Prozess</div>
<svg class="a" style="left:641px;top:735px" width="12" height="8" viewBox="0 0 12 8"><path d="M1.5 1.5 L6 6 L10.5 1.5" fill="none" stroke="#7b7b7b" stroke-width="2"/></svg>
<div class="t b" style="left:667px;top:731px;color:#7b7b7b;letter-spacing:0.68px">PID</div>
<div class="t b" style="left:709px;top:731px;color:#7b7b7b;letter-spacing:-0.08px">RSS</div>
<div class="t b" style="left:778px;top:731px;color:#7b7b7b;letter-spacing:0.15px">CPU</div>
<div class="a" style="left:70px;top:751px;width:591px;height:248px;background:#ededed"></div>
<div class="a" style="left:661px;top:751px;width:153px;height:248px;background:#fff"></div>
<div class="a" style="left:814px;top:729px;width:13px;height:270px;background:#d6d6d6"><div class="a" style="left:3px;top:3px;width:7px;height:65px;background:#9c9c9c;border-radius:4px"></div></div>
<div class="t" style="left:92px;top:755px;letter-spacing:0.54px">at-spi2-registryd --use-gnome-session</div>
<div class="t" style="left:667px;top:755px;letter-spacing:0.79px">7240</div>
<div class="t" style="left:690px;width:77px;text-align:right;top:755px;letter-spacing:0.43px">5,0 MiB</div>
<div class="t" style="left:770px;width:39px;text-align:right;top:755px;letter-spacing:0.60px">0%</div>
<div class="t" style="left:92px;top:780px;letter-spacing:0.56px">at-spi-bus-launcher</div>
<div class="t" style="left:667px;top:780px;letter-spacing:0.79px">7209</div>
<div class="t" style="left:690px;width:77px;text-align:right;top:780px;letter-spacing:0.47px">10,4 MiB</div>
<div class="t" style="left:770px;width:39px;text-align:right;top:780px;letter-spacing:0.60px">0%</div>
<div class="t" style="left:92px;top:805px;letter-spacing:0.52px">bash</div>
<div class="t" style="left:667px;top:805px;letter-spacing:0.79px">7283</div>
<div class="t" style="left:690px;width:77px;text-align:right;top:805px;letter-spacing:0.43px">3,6 MiB</div>
<div class="t" style="left:770px;width:39px;text-align:right;top:805px;letter-spacing:0.60px">0%</div>
<div class="t" style="left:92px;top:830px;letter-spacing:0.46px">-bash</div>
<div class="t" style="left:667px;top:830px;letter-spacing:0.79px">7133</div>
<div class="t" style="left:690px;width:77px;text-align:right;top:830px;letter-spacing:0.43px">3,8 MiB</div>
<div class="t" style="left:770px;width:39px;text-align:right;top:830px;letter-spacing:0.60px">0%</div>
<div class="t" style="left:92px;top:855px;letter-spacing:0.60px">dbus-daemon --config-file=/etc/at-spi2/accessibility.conf --nofork --print-address 3</div>
<div class="t" style="left:667px;top:855px;letter-spacing:0.79px">7234</div>
<div class="t" style="left:690px;width:77px;text-align:right;top:855px;letter-spacing:0.43px">2,9 MiB</div>
<div class="t" style="left:770px;width:39px;text-align:right;top:855px;letter-spacing:0.60px">0%</div>
<div class="t" style="left:92px;top:880px;letter-spacing:0.54px">dbus-daemon --fork --print-pid 5 --print-address 7 --session</div>
<div class="t" style="left:667px;top:880px;letter-spacing:0.79px">7177</div>
<div class="t" style="left:690px;width:77px;text-align:right;top:880px;letter-spacing:0.43px">2,7 MiB</div>
<div class="t" style="left:770px;width:39px;text-align:right;top:880px;letter-spacing:0.60px">0%</div>
<div class="t" style="left:92px;top:905px;letter-spacing:0.53px">dbus-launch --sh-syntax --exit-with-session xfce4-session</div>
<div class="t" style="left:667px;top:905px;letter-spacing:0.79px">7176</div>
<div class="t" style="left:690px;width:77px;text-align:right;top:905px;letter-spacing:0.43px">1,8 MiB</div>
<div class="t" style="left:770px;width:39px;text-align:right;top:905px;letter-spacing:0.60px">0%</div>
<div class="t" style="left:92px;top:930px;letter-spacing:0.63px">gconfd-2</div>
<div class="t" style="left:667px;top:930px;letter-spacing:0.79px">7267</div>
<div class="t" style="left:690px;width:77px;text-align:right;top:930px;letter-spacing:0.43px">4,9 MiB</div>
<div class="t" style="left:770px;width:39px;text-align:right;top:930px;letter-spacing:0.60px">0%</div>
<div class="t" style="left:92px;top:955px;letter-spacing:0.57px">gconf-helper</div>
<div class="t" style="left:667px;top:955px;letter-spacing:0.79px">7265</div>
<div class="t" style="left:690px;width:77px;text-align:right;top:955px;letter-spacing:0.43px">3,3 MiB</div>
<div class="t" style="left:770px;width:39px;text-align:right;top:955px;letter-spacing:0.60px">0%</div>
<div class="t" style="left:92px;top:980px;letter-spacing:0.61px">gpg-agent --sh --daemon --write-env-file /home/xfce/.cache/gpg-agent-info</div>
<div class="t" style="left:667px;top:980px;letter-spacing:0.79px">7185</div>
<div class="t" style="left:690px;width:77px;text-align:right;top:980px;letter-spacing:0.59px">828,0 kiB</div>
<div class="t" style="left:770px;width:39px;text-align:right;top:980px;letter-spacing:0.60px">0%</div>

<svg width="0" height="0" style="position:absolute"><defs>
<radialGradient id="lens" cx=".45" cy=".35" r=".6"><stop offset="0" stop-color="#ffffff"/><stop offset=".6" stop-color="#efefef"/><stop offset="1" stop-color="#c8c8c8"/></radialGradient>
<linearGradient id="ringG" x1="0" y1="0" x2="1" y2="1"><stop offset="0" stop-color="#8a8ae8"/><stop offset=".5" stop-color="#5858c8"/><stop offset="1" stop-color="#3a4ab8"/></linearGradient>
<linearGradient id="handle" x1="0" y1="0" x2="1" y2="1"><stop offset="0" stop-color="#5a6a78"/><stop offset="1" stop-color="#5e4e3c"/></linearGradient>
<symbol id="mag" viewBox="0 0 44 44">
<ellipse cx="30" cy="40" rx="9" ry="2.2" fill="#000" opacity=".12"/>
<path d="M27 30 L37.5 38.5" stroke="#1a1a1a" stroke-width="5.4" stroke-linecap="round"/>
<path d="M27 30 L37.5 38.5" stroke="url(#handle)" stroke-width="3.6" stroke-linecap="round"/>
<circle cx="18" cy="19" r="14.8" fill="url(#lens)"/>
<circle cx="18" cy="19" r="12.7" fill="none" stroke="url(#ringG)" stroke-width="4.2"/>
<circle cx="18" cy="19" r="14.8" fill="none" stroke="#12389a" stroke-width="1.1"/>
<circle cx="18" cy="19" r="10.6" fill="none" stroke="#141c60" stroke-width="1.1"/>
<ellipse cx="21" cy="12" rx="3" ry="1.8" fill="#fff"/>
</symbol>
<symbol id="mixer" viewBox="0 0 20 19">
<rect x=".8" y=".8" width="18.4" height="17.4" rx="2.2" fill="#f2f2f2" stroke="#727272" stroke-width="1.3"/>
<rect x="3" y="3" width="14" height="11" fill="#e2e2e2"/>
<line x1="2.5" y1="15.5" x2="17.5" y2="15.5" stroke="#c8c8c8"/>
<rect x="4.6" y="5" width="2.4" height="8.3" fill="#555"/><rect x="9" y="4" width="2.4" height="9.3" fill="#333"/><rect x="13.4" y="4" width="2.4" height="9.3" fill="#444"/>
<rect x="3.7" y="3.4" width="4.3" height="3" rx=".5" fill="#eee" stroke="#444" stroke-width="1"/>
<rect x="8.1" y="10.6" width="4.3" height="3" rx=".5" fill="#eee" stroke="#444" stroke-width="1"/>
<rect x="12.5" y="6.6" width="4.3" height="3" rx=".5" fill="#eee" stroke="#444" stroke-width="1"/>
</symbol>
<linearGradient id="exitG" x1="0" y1="0" x2="0" y2="1"><stop offset="0" stop-color="#6cbf2a"/><stop offset="1" stop-color="#4ea414"/></linearGradient>
<linearGradient id="monB" x1="0" y1="0" x2="0" y2="1"><stop offset="0" stop-color="#1a4aa0"/><stop offset=".6" stop-color="#2e6ac8"/><stop offset="1" stop-color="#5a90e0"/></linearGradient>
<radialGradient id="arioG" cx=".5" cy=".75" r=".75"><stop offset="0" stop-color="#e8f6ff"/><stop offset=".45" stop-color="#8ccaf8"/><stop offset="1" stop-color="#2a8ae8"/></radialGradient>
<radialGradient id="cdG" cx=".5" cy=".5" r=".5"><stop offset="0" stop-color="#f4f4f4"/><stop offset=".7" stop-color="#dadada"/><stop offset="1" stop-color="#c4c4c4"/></radialGradient>
<radialGradient id="globeG" cx=".4" cy=".35" r=".7"><stop offset="0" stop-color="#b8d0f0"/><stop offset=".6" stop-color="#4a7cc4"/><stop offset="1" stop-color="#1e4c94"/></radialGradient>
<radialGradient id="glbG2" cx=".42" cy=".32" r=".8"><stop offset="0" stop-color="#cfe0f4"/><stop offset=".45" stop-color="#6d9ad0"/><stop offset="1" stop-color="#1f4f96"/></radialGradient>
<symbol id="globe" viewBox="0 0 40 40">
<circle cx="20" cy="20" r="18.6" fill="url(#glbG2)" stroke="#2a5296" stroke-width="1.4"/>
<path d="M23 6 Q28 5 33 9 Q31 12 28 12 Q27 15 30 17 Q34 16 37 19 Q37 26 33 31 Q30 35 28 36 Q27 31 28 27 Q25 24 24 20 Q21 18 22 14 Q20 12 21 9 Z" fill="#f2f2ee"/>
<path d="M6 13 Q9 8 14 6 Q17 7 16 10 Q12 12 12 15 Q10 18 7 17 Z" fill="#f2f2ee" opacity=".9"/>
<path d="M8 22 Q12 21 14 24 Q13 28 10 29 Q7 26 8 22 Z" fill="#f2f2ee" opacity=".85"/>
<ellipse cx="16" cy="11" rx="7" ry="4" fill="#fff" opacity=".35"/>
</symbol>
</defs></svg>
<!-- FINDER -->
<div class="win" style="left:1236px;top:616px;width:484px;height:417px"><div class="tb"></div></div>
<svg class="a" style="left:1240px;top:618px" width="24" height="24" viewBox="1250 768 24 24">
<use href="#gear1" x="1252" y="768.5" width="10" height="10"/>
<use href="#gear1" x="1251" y="779" width="10" height="10"/>
<g transform="translate(1266 781) scale(1.25)"><path d="M-1.2 -4.6 L1.2 -4.6 L1.3 -3 L2.4 -2.4 L3.3 -3.3 L4.6 -1.2 L3 -0.3 L3 0.3 L4.6 1.2 L3.3 3.3 L2.4 2.4 L1.3 3 L1.2 4.6 L-1.2 4.6 L-1.3 3 L-2.4 2.4 L-3.3 3.3 L-4.6 1.2 L-3 .3 L-3 -.3 L-4.6 -1.2 L-3.3 -3.3 L-2.4 -2.4 L-1.3 -3 Z" fill="#cfcfcf" stroke="#4a4a4a" stroke-width=".8"/><circle r="1.6" fill="#eee" stroke="#555" stroke-width=".7"/></g>
</svg>
<div class="t b" style="left:1237px;width:415px;text-align:center;top:623px;color:#9c9c9c;letter-spacing:0.75px">Anwendungsfinder</div>
<svg class="a" style="left:1630px;top:624px" width="15" height="15"><use href="#ibUp"/></svg>
<svg class="a" style="left:1652px;top:624px" width="15" height="15"><use href="#ibMin"/></svg>
<svg class="a" style="left:1674px;top:624px" width="15" height="15"><use href="#ibMax"/></svg>
<svg class="a" style="left:1696px;top:624px" width="15" height="15"><use href="#ibClose"/></svg>

<svg class="a" style="left:1244px;top:651px" width="50" height="50" viewBox="0 0 44 44"><use href="#mag"/></svg>

<div class="a" style="left:1300px;top:661px;width:411px;height:27px;background:#fff;border:1px solid #b6b8b6;border-radius:3px"></div>
<svg class="a" style="left:1688px;top:665px" width="20" height="18" viewBox="0 0 20 18">
<path d="M3.5 9 L10 3 L16.5 9" fill="none" stroke="#8a8a8a" stroke-width="3" stroke-linecap="round" stroke-linejoin="round"/>
<path d="M3.5 9 L10 3 L16.5 9" fill="none" stroke="#fafafa" stroke-width="1.3" stroke-linecap="round" stroke-linejoin="round"/>
<circle cx="10" cy="11" r="1.3" fill="#fff" stroke="#888" stroke-width=".8"/><circle cx="10" cy="15" r="1.3" fill="#fff" stroke="#888" stroke-width=".8"/>
</svg>

<div class="frame" style="left:1245px;top:705px;width:180px;height:279px"></div>
<div class="a" style="left:1246px;top:706px;width:165px;height:30px;background:#3c7fcd"></div>
<div class="vs" style="left:1411px;top:706px;width:13px;height:277px"><div class="th" style="top:3px;height:188px;left:2px;right:2px;border-radius:4px"></div></div>
<div class="frame" style="left:1430px;top:705px;width:282px;height:279px"></div>
<div class="vs" style="left:1698px;top:706px;width:13px;height:277px"><div class="th" style="top:3px;height:36px;left:2px;right:2px"></div></div>
<div class="a" style="left:1426px;top:832px;width:2px;height:24px;background:radial-gradient(circle,#b0b0b0 .7px,transparent .9px) 0 0/2px 4px"></div>
<div class="t" style="left:1277px;top:711px;color:#fff;letter-spacing:0.63px">Alle Anwendungen</div>
<div class="t" style="left:1277px;top:742px;letter-spacing:0.40px">Lesezeichen</div>
<div class="t" style="left:1277px;top:772px;letter-spacing:0.59px">Befehlsverlauf</div>
<div class="t" style="left:1277px;top:805px;letter-spacing:0.61px">Bildung</div>
<div class="t" style="left:1277px;top:835px;letter-spacing:0.45px">Büro</div>
<div class="t" style="left:1277px;top:865px;letter-spacing:0.56px">Einstellungen</div>
<div class="t" style="left:1277px;top:895px;letter-spacing:0.64px">Entwicklung</div>
<div class="t" style="left:1277px;top:925px;letter-spacing:0.54px">Grafik</div>
<div class="t" style="left:1277px;top:955px;letter-spacing:0.75px">Internet</div>
<div class="a" style="left:1431px;top:706px;width:267px;height:277px;overflow:hidden">
<div class="t b" style="left:45px;top:5px;letter-spacing:0.80px">Abmelden</div>
<div class="t" style="left:45px;top:19px;letter-spacing:0.55px">Von der Xfce-Arbeitsumgebung ...</div>
<div class="t b" style="left:45px;top:47px;letter-spacing:0.75px">Anwendungsfinder</div>
<div class="t" style="left:45px;top:61px;letter-spacing:0.64px">Im System installierte Anwendu...</div>
<div class="t b" style="left:45px;top:89px;letter-spacing:0.72px">Anzeige</div>
<div class="t" style="left:45px;top:103px;letter-spacing:0.61px">Bildschirmeinstellungen und An...</div>
<div class="t b" style="left:45px;top:131px;letter-spacing:0.71px">Arbeitsflächen</div>
<div class="t" style="left:45px;top:145px;letter-spacing:0.53px">Anordnung, Namen und Ränder...</div>
<div class="t b" style="left:45px;top:173px;letter-spacing:0.53px">Ario</div>
<div class="t" style="left:45px;top:187px;letter-spacing:0.48px">Client-Anwendung für MPD</div>
<div class="t b" style="left:45px;top:215px;letter-spacing:0.65px">Asunder</div>
<div class="t" style="left:45px;top:229px;letter-spacing:0.54px">Oberfläche zur Erstellung von A...</div>
<div class="t b" style="left:45px;top:257px;letter-spacing:0.64px">Avahi SSH Server Browser</div>
<div class="t" style="left:45px;top:271px;letter-spacing:0.51px">Durchsuchen nach Zeroconf-...</div>
</div>
<div class="a" style="left:1246px;top:990px;width:119px;height:33px;border:1px solid #b9bbb9;border-radius:3px;background:linear-gradient(#f8f8f8,#e2e2e2)"></div>
<div class="t" style="left:1275px;top:998px;letter-spacing:0.56px">Einstellungen</div>
<div class="a" style="left:1495px;top:990px;width:104px;height:33px;border:1px solid #b9bbb9;border-radius:3px;background:linear-gradient(#f8f8f8,#e2e2e2)"></div>
<svg class="a" style="left:1506px;top:998px" width="18" height="18" viewBox="0 0 18 18"><path d="M2 4 L4 2 L9 7 L14 2 L16 4 L11 9 L16 14 L14 16 L9 11 L4 16 L2 14 L7 9 Z" fill="#8a8a8a" stroke="#5c5c5c" stroke-width=".8"/></svg>
<div class="t" style="left:1528px;top:998px;letter-spacing:0.39px">Schließen</div>
<div class="a" style="left:1607px;top:990px;width:104px;height:33px;border:1px solid #c8c8c8;border-radius:3px;background:#efefef"></div>
<div class="t" style="left:1647px;top:998px;color:#9a9a9a;letter-spacing:0.66px">Starten</div>
<svg class="a" style="left:1251px;top:998px" width="20" height="19" viewBox="0 0 20 19"><use href="#mixer"/></svg>
<svg class="a" style="left:1620px;top:996px" width="24" height="22" viewBox="0 0 16 16" opacity=".55"><use href="#gears"/></svg>
<svg class="a" style="left:1240px;top:700px" width="240" height="290" viewBox="1240 700 240 290">
<!-- Alle -->
<g>
<rect x="1255" y="712" width="3" height="10" fill="#e8d85a" transform="rotate(-20 1256 717)"/>
<rect x="1258.5" y="711" width="3.2" height="12" fill="#f0e060" stroke="#b0a030" stroke-width=".5"/>
<rect x="1255.5" y="716" width="5" height="7" fill="#7a3a8a"/><line x1="1257" y1="716" x2="1257" y2="723" stroke="#fff" stroke-width=".6"/><line x1="1259" y1="716" x2="1259" y2="723" stroke="#fff" stroke-width=".6"/>
<rect x="1264" y="710" width="4.5" height="11" fill="#e8e8e8" stroke="#9a9a9a" stroke-width=".6" transform="rotate(15 1266 715)"/>
<rect x="1261" y="718" width="6" height="5" fill="#5ac02a"/>
<path d="M1252 722.5 L1270 722.5 L1269 731 L1253 731 Z" fill="#f4d090" stroke="#b8801a" stroke-width="1"/>
<rect x="1252" y="722.5" width="18" height="3" fill="#fbe8c0" stroke="#b8801a" stroke-width="1"/>
</g>
<!-- Lesezeichen -->
<g transform="translate(1251 741.5) scale(.455 .49)"><use href="#folder" width="44" height="38"/></g>
<path d="M1261 748.5 L1262.2 751.5 L1265.3 751.6 L1262.9 753.5 L1263.8 756.5 L1261 754.8 L1258.2 756.5 L1259.1 753.5 L1256.7 751.6 L1259.8 751.5 Z" fill="none" stroke="#6f5b3f" stroke-width=".9"/>
<!-- Befehlsverlauf -->
<use href="#gear1" x="1252" y="768.5" width="10" height="10"/>
<use href="#gear1" x="1251" y="779" width="10" height="10"/>
<g transform="translate(1266 781) scale(1.25)"><path d="M-1.2 -4.6 L1.2 -4.6 L1.3 -3 L2.4 -2.4 L3.3 -3.3 L4.6 -1.2 L3 -0.3 L3 0.3 L4.6 1.2 L3.3 3.3 L2.4 2.4 L1.3 3 L1.2 4.6 L-1.2 4.6 L-1.3 3 L-2.4 2.4 L-3.3 3.3 L-4.6 1.2 L-3 .3 L-3 -.3 L-4.6 -1.2 L-3.3 -3.3 L-2.4 -2.4 L-1.3 -3 Z" fill="#cfcfcf" stroke="#4a4a4a" stroke-width=".8"/><circle r="1.6" fill="#eee" stroke="#555" stroke-width=".7"/></g>
<!-- Bildung -->
<rect x="1252.5" y="805" width="5" height="19" fill="#e8f0f0" stroke="#777" stroke-width="1"/><rect x="1254" y="809" width="2" height="14" fill="#4aa030"/>
<rect x="1261.5" y="810" width="9.5" height="13" rx="1" fill="#eee" stroke="#777" stroke-width="1"/><rect x="1264" y="814" width="5" height="8" fill="#d8601a"/><rect x="1263" y="815" width="2" height="7" fill="#3a5ab0"/>
<path d="M1258 813 L1261 813 L1261 816 L1264 822 Q1262 825 1259.5 825 Q1256 825 1255 822 L1258 816 Z" fill="#eee" stroke="#777" stroke-width=".9"/><ellipse cx="1259.5" cy="822" rx="3.6" ry="2.4" fill="#4cc02a"/>
<!-- Buero -->
<path d="M1255 841 L1269 841 L1268 854 L1256 854 Z" fill="#f6f6f6" stroke="#888" stroke-width="1"/>
<path d="M1252 835 L1260 846" stroke="#999" stroke-width="2.4" stroke-linecap="round"/><path d="M1252 835 L1260 846" stroke="#ddd" stroke-width="1"/>
<path d="M1270 835 L1264 848" stroke="#c88a1a" stroke-width="2" stroke-linecap="round"/>
<!-- Einstellungen -->
<use href="#mixer" x="1251" y="866" width="20" height="19"/>
<!-- Entwicklung -->
<path d="M1251.5 906 Q1258 900.5 1263.5 900.5 L1267 907 Q1266 911 1262 910 Q1256 909 1251.5 906 Z" fill="#eeeeee" stroke="#8a8a8a" stroke-width="1"/>
<path d="M1264 903 L1264 898 L1271 898" fill="none" stroke="#777" stroke-width="1.6"/>
<!-- Grafik -->
<path d="M1262 925 Q1272 925 1272 935 Q1272 944.5 1262 944.5 Q1253 944.5 1254 938 Q1255 934 1258 935 Q1260 934 1258 931 Q1255 928 1262 925 Z" fill="#f6e6b8" stroke="#c88a1a" stroke-width="1"/>
<circle cx="1267" cy="932" r="1.8" fill="#3a6ad0"/><circle cx="1268" cy="938.5" r="2" fill="#e02020"/><circle cx="1262.5" cy="940.5" r="2" fill="#3ab02a"/>
<path d="M1270 925 L1256 941" stroke="#8a7a5a" stroke-width="1.6"/><path d="M1256.5 940.5 L1252 945 L1254 942 Z" fill="#111" stroke="#111" stroke-width="1.4"/>
<!-- Internet -->
<use href="#globe" x="1251" y="954" width="20.5" height="20.5"/>
<!-- APPS -->
<rect x="1436.5" y="710.5" width="31" height="31" rx="2" fill="url(#exitG)" stroke="#3e8a10" stroke-width="1"/>
<rect x="1443" y="713" width="18" height="27" fill="#fff"/>
<rect x="1437" y="711" width="30" height="14" fill="#fff" opacity=".12"/>
<circle cx="1456" cy="716.5" r="2.2" fill="#5cb41e"/>
<path d="M1447 723 L1451 719.5 L1455 720 L1459 723.5 L1461 723.5 M1454.5 720.5 L1452 728 L1456 735 L1459 738 M1452 728 L1448 733 L1443 733.5 M1451 719.5 L1448.5 724" fill="none" stroke="#5cb41e" stroke-width="2.2" stroke-linecap="round" stroke-linejoin="round"/>
<use href="#mag" x="1432" y="749" width="38" height="38"/>
<rect x="1435.5" y="797.5" width="33" height="24" rx="1" fill="#d6d6d6" stroke="#8a8a8a" stroke-width="1"/>
<rect x="1437.5" y="799.5" width="29" height="19" fill="url(#monB)"/>
<path d="M1452 800 L1456 800 L1450 817 L1446 817 Z" fill="#fff" opacity=".18"/>
<rect x="1447" y="822" width="10" height="3" fill="#c8c8c8"/><rect x="1441" y="825" width="22" height="3" rx="1" fill="#dedede" stroke="#8a8a8a" stroke-width=".8"/>
<rect x="1437.5" y="838.5" width="29" height="29" fill="#9a9a9a" stroke="#3a3a3a" stroke-width="1.2"/>
<rect x="1439" y="840" width="13" height="13" fill="#b8b8b8"/><rect x="1452.5" y="853.5" width="12.5" height="12.5" fill="#8e8e8e"/>
<path d="M1452 839 L1452 867 M1438 853 L1466 853 M1439 866 L1465 866 M1465 840 L1465 866" stroke="#e8e8e8" stroke-width=".8" stroke-dasharray="1 1"/>
<circle cx="1451" cy="897" r="14" fill="url(#arioG)" stroke="#d0d0d0" stroke-width="1.2"/>
<path d="M1452.5 900 L1452.5 881 L1468 877.5 L1468 898" fill="none" stroke="#a8d4fa" stroke-width="1.8"/>
<path d="M1452.5 900 L1452.5 881" stroke="#2a70c8" stroke-width="1.2"/>
<ellipse cx="1449" cy="901" rx="3.6" ry="2.5" fill="#1a5ab8" transform="rotate(-25 1449 901)"/>
<ellipse cx="1465" cy="899" rx="3.6" ry="2.5" fill="#3a8ae0" transform="rotate(-25 1465 899)"/>
<circle cx="1452" cy="936.5" r="15.6" fill="url(#cdG)" stroke="#555" stroke-width="1.2"/>
<path d="M1452 924 L1440 936 L1452 949 L1464 936 Z" fill="#fff" opacity=".18"/>
<circle cx="1452" cy="936.5" r="4" fill="#fff" stroke="#555" stroke-width="1.2"/>
<path d="M1451 921.5 L1454 925 L1450 927.5 L1453 931" fill="none" stroke="#222" stroke-width="2"/>
<rect x="1447.5" y="963.5" width="18" height="17" rx="1" fill="#f4f4f4" stroke="#888" stroke-width="1"/>
<path d="M1455 970 L1455 967.5 L1458 967.5 L1458 970" fill="none" stroke="#777" stroke-width="1"/>
<path d="M1456 970 Q1455 978 1446 984" fill="none" stroke="#5a80c8" stroke-width="2.4"/>
<path d="M1456 970 Q1455 978 1446 984" fill="none" stroke="#cfe0f8" stroke-width=".8"/>
</svg>


<!-- DOCK -->
<div class="a" style="left:807px;top:1031px;width:306px;height:49px;background:#ededed;border-top:1px solid #fff;box-shadow:0 0 6px rgba(0,0,0,.25)"></div>
<div class="a" style="left:859px;top:1039px;width:1px;height:34px;background:#b4b4b4"></div>
<div class="a" style="left:1059px;top:1039px;width:1px;height:34px;background:#b4b4b4"></div>
<svg class="a" style="left:807px;top:1031px" width="306" height="49" viewBox="807 1031 306 49">
<defs>
<linearGradient id="cabG" x1="0" y1="0" x2="0" y2="1"><stop offset="0" stop-color="#fafafa"/><stop offset="1" stop-color="#cfcfcf"/></linearGradient>
<linearGradient id="drwG" x1="0" y1="0" x2="0" y2="1"><stop offset="0" stop-color="#f4f4f4"/><stop offset="1" stop-color="#d8d8d8"/></linearGradient>
<radialGradient id="glb" cx=".45" cy=".3" r=".75"><stop offset="0" stop-color="#dfe9f5"/><stop offset=".5" stop-color="#6f96c8"/><stop offset="1" stop-color="#23599e"/></radialGradient>
</defs>
<g transform="translate(813.5 1038) scale(.83 .86)"><use href="#folder" width="44" height="38"/></g>
<g fill="none" stroke="#6f5b3f" stroke-width="1"><path d="M825 1054 L825 1052.5 L826.5 1052.5 M837 1052.5 L838.5 1052.5 L838.5 1054 M825 1065 L825 1066.5 L826.5 1066.5 M837 1066.5 L838.5 1066.5 L838.5 1065"/><path d="M829 1055.5 L833 1055.5 L835 1057.5 L835 1063.5 L829 1063.5 Z" stroke-width="1.2"/></g>
<g transform="translate(870 1041) scale(1.64 1.72)"><use href="#trmIco" width="22" height="18"/></g>
<path d="M924.5 1041 L926.5 1036.5 L945 1036.5 L947 1041 Z" fill="#f0f0f0" stroke="#b8b8b8" stroke-width="1"/>
<rect x="922.5" y="1041" width="26.5" height="31.5" fill="url(#cabG)" stroke="#b8b8b8" stroke-width="1"/>
<rect x="924.5" y="1043" width="22" height="11.5" fill="url(#drwG)" stroke="#8a8a8a" stroke-width="1"/>
<rect x="924.5" y="1057" width="22" height="12" fill="url(#drwG)" stroke="#8a8a8a" stroke-width="1"/>
<rect x="930.5" y="1047.5" width="10" height="3" rx="1" fill="#e8e8e8" stroke="#777" stroke-width=".8"/>
<rect x="930.5" y="1061.5" width="10" height="3" rx="1" fill="#e8e8e8" stroke="#777" stroke-width=".8"/>
<use href="#globe" x="965.5" y="1037" width="36.6" height="36.6"/>
<path d="M980.2 1050.5 L966 1064.5 L972 1064.8 L969.5 1071 L973.5 1073 L976 1066.8 L980.2 1070.5 Z" fill="#f2f2f2" stroke="#6a6a6a" stroke-width="1" stroke-linejoin="round"/>
<g transform="translate(1011 1036) scale(.9)"><use href="#mag" width="44" height="44"/></g>
<g transform="translate(1070 1038.5) scale(.82 .86)"><use href="#folder" width="44" height="38"/></g>
</svg>

<svg class="a" style="left:880px;top:665px" width="160" height="95" viewBox="0 0 1819 1080">
<g fill="#073449">
<path d="M62 100 Q250 170 420 240 Q560 310 680 430 L630 470 Q520 340 380 260 Q230 185 62 100 Z"/>
<path d="M650 430 Q700 395 780 398 Q900 405 1010 428 Q1100 440 1130 425 Q1150 370 1175 345 Q1150 250 1175 205 Q1215 170 1255 225 Q1285 270 1305 310 Q1300 200 1320 150 Q1360 115 1395 165 Q1415 230 1410 320 Q1560 335 1690 410 Q1760 455 1745 510 Q1720 560 1600 610 Q1500 650 1460 690 Q1480 740 1535 855 Q1450 840 1380 820 Q1410 880 1445 955 Q1330 920 1230 870 Q1100 895 950 890 Q820 885 720 860 Q640 930 570 985 Q590 900 600 850 Q545 865 505 875 Q540 820 575 775 Q555 690 580 580 Q610 480 650 430 Z"/>
<path d="M1668 238 L1662 335 M1755 252 L1692 355" stroke="#073449" stroke-width="14" fill="none" stroke-linecap="round"/>
</g>
<circle cx="1447" cy="402" r="32" fill="#8fd3e0"/>
<path d="M1385 405 Q1385 460 1460 468" stroke="#8fd3e0" stroke-width="16" fill="none"/>
<path d="M1432 578 L1545 528 M1480 632 L1555 568" stroke="#8fd3e0" stroke-width="16" fill="none" stroke-linecap="round"/>
</svg>
<svg class="a" style="left:1150px;top:687px" width="16" height="22" viewBox="0 0 16 22">
<path d="M1 1 L1 17 L5 13.2 L8 20 L10.5 19 L7.6 12.3 L12.8 12.3 Z" fill="#000" stroke="#fff" stroke-width="1.1" stroke-linejoin="round"/>
</svg>


</body></html>
